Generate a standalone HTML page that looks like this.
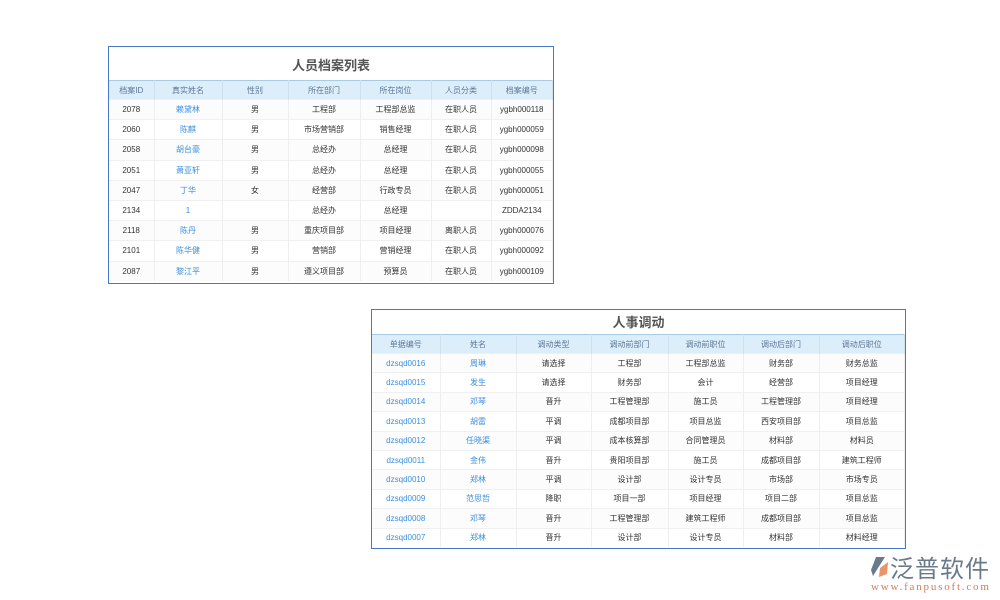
<!DOCTYPE html>
<html><head><meta charset="utf-8"><style>
body{margin:0;width:1000px;height:600px;background:#fff;position:relative;overflow:hidden;font-family:"Liberation Sans","Noto Sans CJK SC",sans-serif;}
.t{position:absolute;border:1px solid #4a78c8;box-sizing:border-box;background:#fff;overflow:hidden;}
.t h1{margin:0;text-align:center;font-size:13px;font-weight:bold;color:#555;}
table{border-collapse:collapse;width:100%;table-layout:fixed;font-size:8px;color:#333;}
th{background:#ddeefb;color:#5a7898;font-weight:normal;border-top:1px solid #a8cbe8;border-right:1px solid #cfe0f0;padding:0;}
td{text-align:center;border-right:1px solid #eee;border-top:1px solid #f0f0f0;padding:0;}
tr:nth-child(even) td{background:#fcfcfd;}
.b{color:#3b8fe0;}
</style></head><body>
<div class="t" style="left:108px;top:46px;width:446px;height:238px;">
<h1 style="height:33px;line-height:38px;">人员档案列表</h1>
<table><colgroup><col style="width:45px"><col style="width:68px"><col style="width:66px"><col style="width:72px"><col style="width:71px"><col style="width:60px"><col></colgroup>
<tr style="height:19px"><th>档案ID</th><th>真实姓名</th><th>性别</th><th>所在部门</th><th>所在岗位</th><th>人员分类</th><th>档案编号</th></tr>
<tr style="height:20.2px"><td>2078</td><td class="b">赖黛林</td><td>男</td><td>工程部</td><td>工程部总监</td><td>在职人员</td><td>ygbh000118</td></tr>
<tr style="height:20.2px"><td>2060</td><td class="b">陈麒</td><td>男</td><td>市场营销部</td><td>销售经理</td><td>在职人员</td><td>ygbh000059</td></tr>
<tr style="height:20.2px"><td>2058</td><td class="b">胡台豪</td><td>男</td><td>总经办</td><td>总经理</td><td>在职人员</td><td>ygbh000098</td></tr>
<tr style="height:20.2px"><td>2051</td><td class="b">萧亚轩</td><td>男</td><td>总经办</td><td>总经理</td><td>在职人员</td><td>ygbh000055</td></tr>
<tr style="height:20.2px"><td>2047</td><td class="b">丁华</td><td>女</td><td>经营部</td><td>行政专员</td><td>在职人员</td><td>ygbh000051</td></tr>
<tr style="height:20.2px"><td>2134</td><td class="b">1</td><td></td><td>总经办</td><td>总经理</td><td></td><td>ZDDA2134</td></tr>
<tr style="height:20.2px"><td>2118</td><td class="b">陈丹</td><td>男</td><td>重庆项目部</td><td>项目经理</td><td>离职人员</td><td>ygbh000076</td></tr>
<tr style="height:20.2px"><td>2101</td><td class="b">陈华健</td><td>男</td><td>营销部</td><td>营销经理</td><td>在职人员</td><td>ygbh000092</td></tr>
<tr style="height:20.2px"><td>2087</td><td class="b">黎江平</td><td>男</td><td>遵义项目部</td><td>预算员</td><td>在职人员</td><td>ygbh000109</td></tr>
</table></div>
<div class="t" style="left:371px;top:309px;width:535px;height:240px;">
<h1 style="height:24px;line-height:25px;">人事调动</h1>
<table><colgroup><col style="width:68px"><col style="width:76px"><col style="width:75px"><col style="width:77px"><col style="width:75px"><col style="width:76px"><col></colgroup>
<tr style="height:19px"><th>单据编号</th><th>姓名</th><th>调动类型</th><th>调动前部门</th><th>调动前职位</th><th>调动后部门</th><th>调动后职位</th></tr>
<tr style="height:19.4px"><td class="b">dzsqd0016</td><td class="b">周琳</td><td>请选择</td><td>工程部</td><td>工程部总监</td><td>财务部</td><td>财务总监</td></tr>
<tr style="height:19.4px"><td class="b">dzsqd0015</td><td class="b">发生</td><td>请选择</td><td>财务部</td><td>会计</td><td>经营部</td><td>项目经理</td></tr>
<tr style="height:19.4px"><td class="b">dzsqd0014</td><td class="b">邓琴</td><td>晋升</td><td>工程管理部</td><td>施工员</td><td>工程管理部</td><td>项目经理</td></tr>
<tr style="height:19.4px"><td class="b">dzsqd0013</td><td class="b">胡雷</td><td>平调</td><td>成都项目部</td><td>项目总监</td><td>西安项目部</td><td>项目总监</td></tr>
<tr style="height:19.4px"><td class="b">dzsqd0012</td><td class="b">任晓渠</td><td>平调</td><td>成本核算部</td><td>合同管理员</td><td>材料部</td><td>材料员</td></tr>
<tr style="height:19.4px"><td class="b">dzsqd0011</td><td class="b">金伟</td><td>晋升</td><td>贵阳项目部</td><td>施工员</td><td>成都项目部</td><td>建筑工程师</td></tr>
<tr style="height:19.4px"><td class="b">dzsqd0010</td><td class="b">郑林</td><td>平调</td><td>设计部</td><td>设计专员</td><td>市场部</td><td>市场专员</td></tr>
<tr style="height:19.4px"><td class="b">dzsqd0009</td><td class="b">范思哲</td><td>降职</td><td>项目一部</td><td>项目经理</td><td>项目二部</td><td>项目总监</td></tr>
<tr style="height:19.4px"><td class="b">dzsqd0008</td><td class="b">邓琴</td><td>晋升</td><td>工程管理部</td><td>建筑工程师</td><td>成都项目部</td><td>项目总监</td></tr>
<tr style="height:19.4px"><td class="b">dzsqd0007</td><td class="b">郑林</td><td>晋升</td><td>设计部</td><td>设计专员</td><td>材料部</td><td>材料经理</td></tr>
</table></div>
<svg style="position:absolute;left:870px;top:556px" width="20" height="22" viewBox="0 0 20 22">
<path d="M6 1 L15 1 L8 12 L3 20 L1 14 Z" fill="#6a7a8c"/>
<path d="M10 12 L18 6 L17 18 L9 21 Z" fill="#e8956b"/>
</svg>
<div style="position:absolute;left:890px;top:553px;font-size:24px;color:#6a7a8c;font-family:'Noto Sans CJK SC',sans-serif;letter-spacing:1px;line-height:28px;">泛普软件</div>
<div style="position:absolute;left:871px;top:582px;font-size:11px;color:#d97a55;font-family:'Liberation Serif',serif;line-height:11px;letter-spacing:1.8px;">www.fanpusoft.com</div>
</body></html>
